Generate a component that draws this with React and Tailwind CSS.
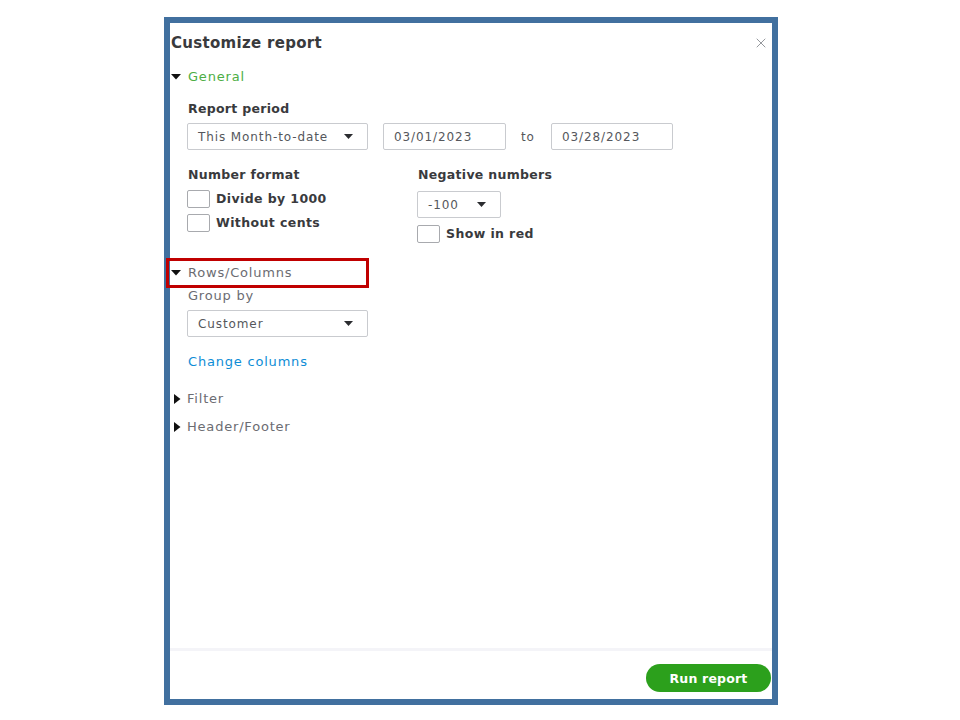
import { X } from 'lucide-react'

const font = { fontFamily: '"DejaVu Sans", "Liberation Sans", sans-serif' }

function DownTri({ className = '' }) {
  return (
    <svg width="10" height="6" viewBox="0 0 10 6" className={className}>
      <polygon points="0,0 10,0 5,5.5" fill="#111" />
    </svg>
  )
}

function RightTri() {
  return (
    <svg width="7" height="10" viewBox="0 0 7 10" className="ml-[4px] mr-[6px]">
      <polygon points="0,0 6.5,5 0,10" fill="#111" />
    </svg>
  )
}

function Select({ label, width, height = 'h-[27px]' }) {
  return (
    <div className={`${width} ${height} border border-[#c9cbcf] rounded-[2px] flex items-center justify-between pl-[10px] pr-[14px] text-[12px] tracking-[0.9px] text-[#55575c]`}>
      <span>{label}</span>
      <svg width="9" height="5" viewBox="0 0 9 5"><polygon points="0,0 9,0 4.5,5" fill="#2b2c30" /></svg>
    </div>
  )
}

function Check({ label, top = '' }) {
  return (
    <div className={`flex items-center h-[18px] ${top}`}>
      <div className="w-[23px] h-[18px] border border-[#a8aaae] rounded-[2px] bg-white" />
      <span className="ml-[6px] text-[12.5px] font-bold tracking-[0.4px] text-[#393a3d]">{label}</span>
    </div>
  )
}

export default function App() {
  return (
    <div className="w-[960px] h-[720px] bg-white pl-[164px] pt-[17px] relative" style={font}>
      <div className="w-[614px] h-[688px] border-[6px] border-[#41709f] bg-white flex flex-col relative">
        <div className="flex-1 relative">
          <X className="absolute right-[3px] top-[12px] text-[#8d9096]" size={16} strokeWidth={1.4} />

          <div className="mt-[11px] ml-[1px] h-[18px] leading-[18px] text-[15px] font-bold tracking-[0.3px] text-[#393a3d]">Customize report</div>

          <div className="mt-[16px] h-[18px] flex items-center">
            <DownTri className="ml-[1px] mr-[7px]" />
            <span className="text-[13px] tracking-[0.8px] text-[#4cae44]">General</span>
          </div>

          <div className="pl-[17px]">
            <div className="mt-[14px] h-[18px] leading-[18px] text-[12.5px] font-bold tracking-[0.3px] text-[#393a3d] pl-[1px]">Report period</div>
            <div className="mt-[5px] flex items-center">
              <Select label="This Month-to-date" width="w-[181px]" />
              <div className="ml-[15px] w-[123px] h-[27px] border border-[#c9cbcf] rounded-[2px] flex items-center pl-[10px] text-[12px] tracking-[0.9px] text-[#55575c]">03/01/2023</div>
              <span className="ml-[15px] w-[30px] text-[12px] tracking-[0.9px] text-[#55575c]">to</span>
              <div className="w-[122px] h-[27px] border border-[#c9cbcf] rounded-[2px] flex items-center pl-[10px] text-[12px] tracking-[0.9px] text-[#55575c]">03/28/2023</div>
            </div>

            <div className="mt-[16px] flex">
              <div className="w-[230px]">
                <div className="h-[18px] leading-[18px] text-[12.5px] font-bold tracking-[0.3px] text-[#393a3d] pl-[1px]">Number format</div>
                <Check label="Divide by 1000" top="mt-[6px]" />
                <Check label="Without cents" top="mt-[6px]" />
              </div>
              <div>
                <div className="h-[18px] leading-[18px] text-[12.5px] font-bold tracking-[0.3px] text-[#393a3d] pl-[1px]">Negative numbers</div>
                <div className="mt-[7px]">
                  <Select label="-100" width="w-[84px]" height="h-[27px]" />
                </div>
                <Check label="Show in red" top="mt-[7px]" />
              </div>
            </div>
          </div>

          <div className="mt-[21px] h-[18px] flex items-center">
            <DownTri className="ml-[1px] mr-[7px]" />
            <span className="text-[13px] tracking-[0.8px] text-[#6b6c72]">Rows/Columns</span>
          </div>

          <div className="pl-[17px]">
            <div className="mt-[5px] h-[18px] leading-[18px] text-[13px] tracking-[0.8px] text-[#6b6c72] pl-[1px]">Group by</div>
            <div className="mt-[5px]">
              <Select label="Customer" width="w-[181px]" />
            </div>
            <div className="mt-[16px] h-[18px] leading-[18px] text-[13px] tracking-[0.8px] text-[#0e8dd6] pl-[1px]">Change columns</div>
          </div>

          <div className="mt-[19px] h-[18px] flex items-center">
            <RightTri />
            <span className="text-[13px] tracking-[0.8px] text-[#6b6c72]">Filter</span>
          </div>
          <div className="mt-[10px] h-[18px] flex items-center">
            <RightTri />
            <span className="text-[13px] tracking-[0.8px] text-[#6b6c72]">Header/Footer</span>
          </div>
        </div>

        <div className="border-t-[3px] border-[#f4f4f8] pt-[13px] pb-[7px] flex justify-end pr-[1px]">
          <button className="w-[125px] h-[28px] rounded-full bg-[#2ca01c] text-white text-[12.5px] font-bold tracking-[0.2px] leading-[30px]">Run report</button>
        </div>
      </div>

      <div className="absolute left-[166px] top-[258px] w-[203px] h-[30px] border-[3px] border-[#c00000]" />
    </div>
  )
}
